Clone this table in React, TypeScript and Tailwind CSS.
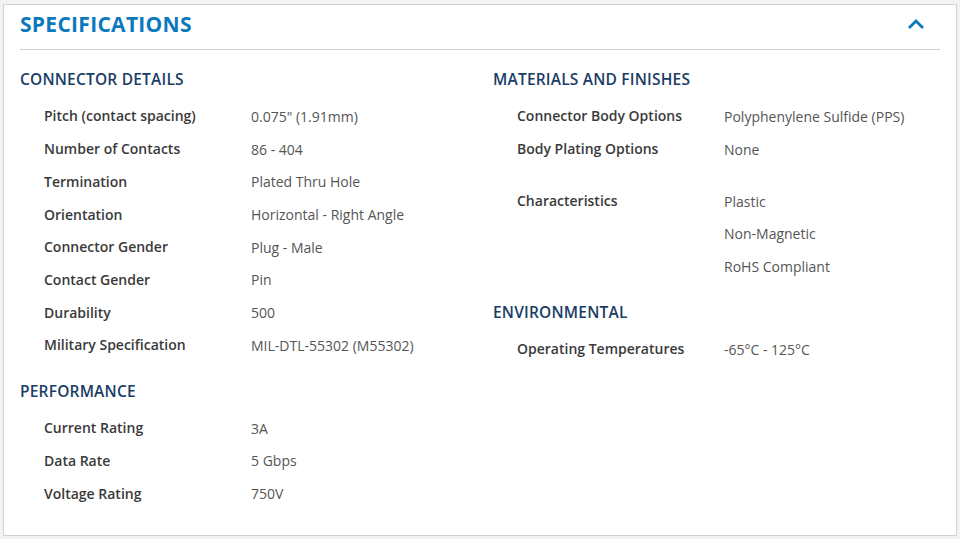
import React from 'react';

type Row = { label: string; values: string[] };
type Section = { title: string; rows: Row[] };

const LEFT: Section[] = [
  {
    title: 'CONNECTOR DETAILS',
    rows: [
      { label: 'Pitch (contact spacing)', values: ['0.075" (1.91mm)'] },
      { label: 'Number of Contacts', values: ['86 - 404'] },
      { label: 'Termination', values: ['Plated Thru Hole'] },
      { label: 'Orientation', values: ['Horizontal - Right Angle'] },
      { label: 'Connector Gender', values: ['Plug - Male'] },
      { label: 'Contact Gender', values: ['Pin'] },
      { label: 'Durability', values: ['500'] },
      { label: 'Military Specification', values: ['MIL-DTL-55302 (M55302)'] },
    ],
  },
  {
    title: 'PERFORMANCE',
    rows: [
      { label: 'Current Rating', values: ['3A'] },
      { label: 'Data Rate', values: ['5 Gbps'] },
      { label: 'Voltage Rating', values: ['750V'] },
    ],
  },
];

const RIGHT: Section[] = [
  {
    title: 'MATERIALS AND FINISHES',
    rows: [
      { label: 'Connector Body Options', values: ['Polyphenylene Sulfide (PPS)'] },
      { label: 'Body Plating Options', values: ['None'] },
      { label: 'Characteristics', values: ['Plastic', 'Non-Magnetic', 'RoHS Compliant'] },
    ],
  },
  {
    title: 'ENVIRONMENTAL',
    rows: [{ label: 'Operating Temperatures', values: ['-65°C - 125°C'] }],
  },
];

function SpecSection({ section, first }: { section: Section; first: boolean }) {
  return (
    <div className={first ? 'pt-[15px]' : 'pt-[15.6px]'}>
      <h3 className="h-[30px] flex items-center text-[15.5px] font-semibold text-[#1a3d66] tracking-[0.2px]">
        {section.title}
      </h3>
      <div className="mt-[4.6px]">
        {section.rows.map((row) => (
          <div
            key={row.label}
            className={`flex pl-6 ${row.values.length > 1 ? 'mt-[19.3px]' : ''}`}
          >
            <div className="w-[207px] h-[32.7px] flex items-center text-[14px] font-semibold text-[#3a3a3a]">
              {row.label}
            </div>
            <div className="flex flex-col">
              {row.values.map((v) => (
                <div
                  key={v}
                  className="h-[32.7px] flex items-center pt-[1px] text-[14px] text-[#555555]"
                >
                  {v}
                </div>
              ))}
            </div>
          </div>
        ))}
      </div>
    </div>
  );
}

export default function App() {
  return (
    <div
      className="h-[539px] w-[960px] bg-[#f3f3f3] pt-[4px] pl-[3px] pr-[3px] pb-[3px]"
      style={{ fontFamily: '"Open Sans", "Noto Sans", sans-serif' }}
    >
      <div className="h-full bg-white border border-[#d2d2d2] px-4">
        <div className="flex items-center justify-between h-[45px] border-b border-[#cfcfcf]">
          <h2 className="text-[21px] font-bold text-[#0b79be] tracking-[0.3px] pb-[4px]">
            SPECIFICATIONS
          </h2>
          <svg width="18" height="12" viewBox="0 0 18 12" className="mr-[15px] mb-[7px]">
            <polyline
              points="2,10 9,3 16,10"
              fill="none"
              stroke="#0b79be"
              strokeWidth="2.8"
            />
          </svg>
        </div>
        <div className="grid grid-cols-[473px_1fr]">
          <div>
            {LEFT.map((s, i) => (
              <SpecSection key={s.title} section={s} first={i === 0} />
            ))}
          </div>
          <div>
            {RIGHT.map((s, i) => (
              <SpecSection key={s.title} section={s} first={i === 0} />
            ))}
          </div>
        </div>
      </div>
    </div>
  );
}
